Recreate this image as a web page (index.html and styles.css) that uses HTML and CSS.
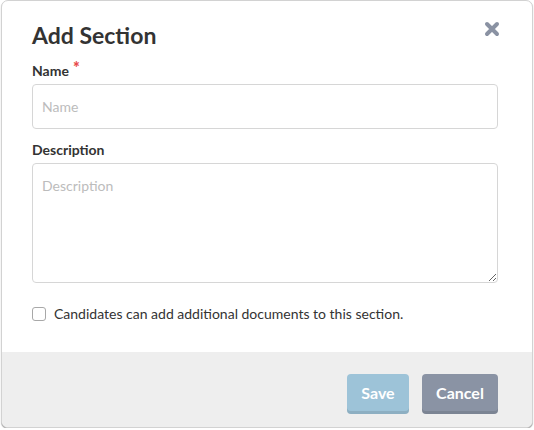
FILE: index.html
```html
<!DOCTYPE html>
<html>
<head>
<meta charset="utf-8">
<link rel="stylesheet" href="styles.css">
</head>
<body>
<div class="dialog">
  <div class="body">
    <div class="header">
      <h1 class="title">Add Section</h1>
      <button class="close" aria-label="Close">
        <svg width="16" height="16" viewBox="0 0 16 16"><path d="M3 3 L13 13 M13 3 L3 13" stroke="#8a92a3" stroke-width="4" stroke-linecap="round"/></svg>
      </button>
    </div>
    <label class="label">Name<span class="req">*</span></label>
    <input class="input" type="text" placeholder="Name">
    <label class="label label-desc">Description</label>
    <textarea class="textarea" placeholder="Description"></textarea>
    <label class="check">
      <span class="box"></span>
      <span class="check-text">Candidates can add additional documents to this section.</span>
    </label>
  </div>
  <div class="footer">
    <button class="btn btn-save">Save</button>
    <button class="btn btn-cancel">Cancel</button>
  </div>
</div>
</body>
</html>
```

FILE: styles.css
```css
html, body {
  margin: 0;
  padding: 0;
  background: #ffffff;
}
body {
  font-family: Lato, "Open Sans", sans-serif;
  color: #333333;
}
.dialog {
  margin-left: 1px;
  width: 530px;
  height: 426px;
  border: 1px solid #d2d2d2;
  border-radius: 7px;
  box-shadow: 0 1px 1px rgba(0,0,0,0.35);
  overflow: hidden;
  display: flex;
  flex-direction: column;
  background: #fff;
}
.body {
  padding: 0 34px 0 30px;
  flex: 1;
  display: flex;
  flex-direction: column;
}
.header {
  display: flex;
  justify-content: space-between;
  align-items: flex-start;
  height: 56px;
}
.title {
  margin: 20px 0 0 0;
  font-family: Lato, sans-serif;
  font-weight: 700;
  font-size: 23px;
  line-height: 28px;
  color: #333;
}
.close {
  margin: 20px -2px 0 0;
  padding: 0;
  border: 0;
  background: none;
  width: 16px;
  height: 16px;
  display: flex;
}
.label {
  display: block;
  font-weight: 700;
  font-size: 14px;
  line-height: 18px;
  margin-top: 5px;
  color: #333;
}
.req {
  color: #e84c4c;
  margin-left: 4px;
  font-size: 16px;
  font-weight: 900;
  line-height: 0;
  position: relative;
  top: -2px;
}
.input {
  margin-top: 4px;
  box-sizing: border-box;
  height: 45px;
  width: 100%;
  border: 1px solid #d6d6d6;
  border-radius: 4px;
  padding: 0 9px;
  font-family: Lato, sans-serif;
  font-size: 14px;
  color: #333;
}
.input::placeholder, .textarea::placeholder {
  color: #bcbcbc;
}
.label-desc {
  margin-top: 12px;
}
.textarea {
  margin-top: 4px;
  box-sizing: border-box;
  height: 120px;
  width: 100%;
  border: 1px solid #d6d6d6;
  border-radius: 4px;
  padding: 13px 9px;
  font-family: Lato, sans-serif;
  font-size: 14px;
  resize: vertical;
}
.check {
  margin-top: 22px;
  display: flex;
  align-items: center;
  gap: 8px;
}
.box {
  width: 12px;
  height: 12px;
  border: 1px solid #a8a8a8;
  border-radius: 3px;
  background: #fff;
  flex: none;
}
.check-text {
  font-size: 14px;
  line-height: 18px;
  color: #333;
}
.footer {
  background: #eeeeee;
  height: 75px;
  display: flex;
  justify-content: flex-end;
  align-items: flex-start;
  gap: 13px;
  padding: 22px 34px 0 0;
  box-sizing: border-box;
}
.btn {
  height: 40px;
  border: 0;
  border-radius: 4px;
  color: #fff;
  font-family: Lato, sans-serif;
  font-weight: 700;
  font-size: 16px;
  padding: 0 14px 3px;
  box-shadow: inset 0 -3px 0 rgba(0,0,0,0.1);
}
.btn-save {
  background: #9dc3d8;
  width: 62px;
}
.btn-cancel {
  background: #8a93a4;
  width: 76px;
}
```
